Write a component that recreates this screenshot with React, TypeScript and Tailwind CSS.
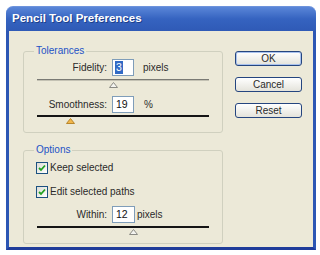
import React from 'react';

const font = { fontFamily: '"Liberation Sans", Arial, sans-serif' };

function Thumb({ active }: { active?: boolean }) {
  return (
    <svg width="9" height="6" viewBox="0 0 9 6" className="block">
      <path
        d="M4.5 0.5 L8.5 5.5 L0.5 5.5 Z"
        fill={active ? '#f2b64a' : '#f4f4f0'}
        stroke={active ? '#b8862c' : '#8a8a84'}
        strokeWidth="1"
      />
    </svg>
  );
}

function Slider({ pos, light, active }: { pos: number; light?: boolean; active?: boolean }) {
  return (
    <div className="ml-[13px] w-[172px]">
      {light ? (
        <div className="h-[2px] border-t border-[#7a7a74] border-b border-b-[#c4c2b4]" />
      ) : (
        <div className="h-[2px] bg-[#151515]" />
      )}
      <div className="mt-[1px]" style={{ marginLeft: pos }}>
        <Thumb active={active} />
      </div>
    </div>
  );
}

function Field({
  label,
  value,
  unit,
  selected,
  unitGap,
  inputW,
}: {
  label: string;
  value: string;
  unit: string;
  selected?: boolean;
  unitGap: string;
  inputW: string;
}) {
  return (
    <div className="flex items-center">
      <div className="w-[88px] text-right text-[10px] text-[#2a2a2a] pr-[5px]">{label}</div>
      <div
        className={`${inputW} h-[17px] bg-white border border-[#7f9db9] flex items-center pl-[2px] text-[10.5px] text-[#111]`}
      >
        {selected ? (
          <span className="bg-[#316ac5] text-white leading-[13px] px-[1px]">{value}</span>
        ) : (
          <span className="pl-[1px]">{value}</span>
        )}
      </div>
      <div className={`${unitGap} text-[10px] text-[#2a2a2a]`}>{unit}</div>
    </div>
  );
}

function Check({ label }: { label: string }) {
  return (
    <div className="flex items-center gap-[2px]">
      <div className="w-[12px] h-[12px] border border-[#1c5180] bg-gradient-to-br from-[#dcdcd6] to-white flex items-center justify-center">
        <svg width="8" height="8" viewBox="0 0 8 8">
          <path d="M1 4 L3 6 L7 1.5" fill="none" stroke="#21a121" strokeWidth="1.8" />
        </svg>
      </div>
      <span className="text-[10px] text-[#2a2a2a]">{label}</span>
    </div>
  );
}

function Group({ title, children, className }: { title: string; children: React.ReactNode; className?: string }) {
  return (
    <div className={`w-[200px] border border-[#d0d0bf] rounded-[3px] ${className ?? ''}`}>
      <div className="-mt-[8px] ml-[10px] w-fit px-[2px] bg-[#ece9d8] text-[10px] leading-[14px] text-[#2352c6]">
        {title}
      </div>
      {children}
    </div>
  );
}

function Button({ label, isDefault }: { label: string; isDefault?: boolean }) {
  return (
    <div
      className={`w-[67px] h-[15px] rounded-[3px] border border-[#25457f] bg-gradient-to-b from-white to-[#e4e3db] flex items-center justify-center text-[10px] text-[#2a2a2a] ${
        isDefault ? 'shadow-[inset_0_0_0_1px_#a9c2ee]' : ''
      }`}
    >
      {label}
    </div>
  );
}

export default function App() {
  return (
    <div className="w-[320px] h-[255px] bg-white pt-[6px] pl-[6px]" style={font}>
      <div className="w-[310px] h-[244px] flex flex-col">
        {/* Title bar */}
        <div className="h-[25px] rounded-t-[7px] bg-gradient-to-b from-[#5a86d8] via-[#3563c0] to-[#2f5ab6] flex items-center pl-[6px] border-t border-[#6d93dc]">
          <span className="text-white font-bold text-[11.5px] [text-shadow:1px_1px_0_#1d3f8a]">
            Pencil Tool Preferences
          </span>
        </div>

        {/* Client */}
        <div className="flex-1 bg-[#ece9d8] border-l-[3px] border-r-[3px] border-b-[3px] border-[#2c56b4] border-b-[#1f3c9a] flex">
          <div className="ml-[14px] mt-[20px]">
            <Group title="Tolerances" className="pb-[8px]">
              <div className="mt-[1px]">
                <Field label="Fidelity:" value="3" unit="pixels" selected unitGap="ml-[9px]" inputW="w-[22px]" />
              </div>
              <div className="mt-[3px]">
                <Slider pos={72} light />
              </div>
              <div className="mt-[8px]">
                <Field label="Smoothness:" value="19" unit="%" unitGap="ml-[10px]" inputW="w-[22px]" />
              </div>
              <div className="mt-[2px]">
                <Slider pos={29} active />
              </div>
            </Group>

            <Group title="Options" className="mt-[17px] pb-[8px]">
              <div className="ml-[12px] mt-[3px]">
                <Check label="Keep selected" />
              </div>
              <div className="ml-[12px] mt-[9px]">
                <Check label="Edit selected paths" />
              </div>
              <div className="mt-[7px]">
                <Field label="Within:" value="12" unit="pixels" unitGap="ml-[2px]" inputW="w-[23px]" />
              </div>
              <div className="mt-[3px]">
                <Slider pos={92} />
              </div>
            </Group>
          </div>

          <div className="ml-[12px] mt-[20px] flex flex-col gap-[11px]">
            <Button label="OK" isDefault />
            <Button label="Cancel" />
            <Button label="Reset" />
          </div>
        </div>
      </div>
    </div>
  );
}
